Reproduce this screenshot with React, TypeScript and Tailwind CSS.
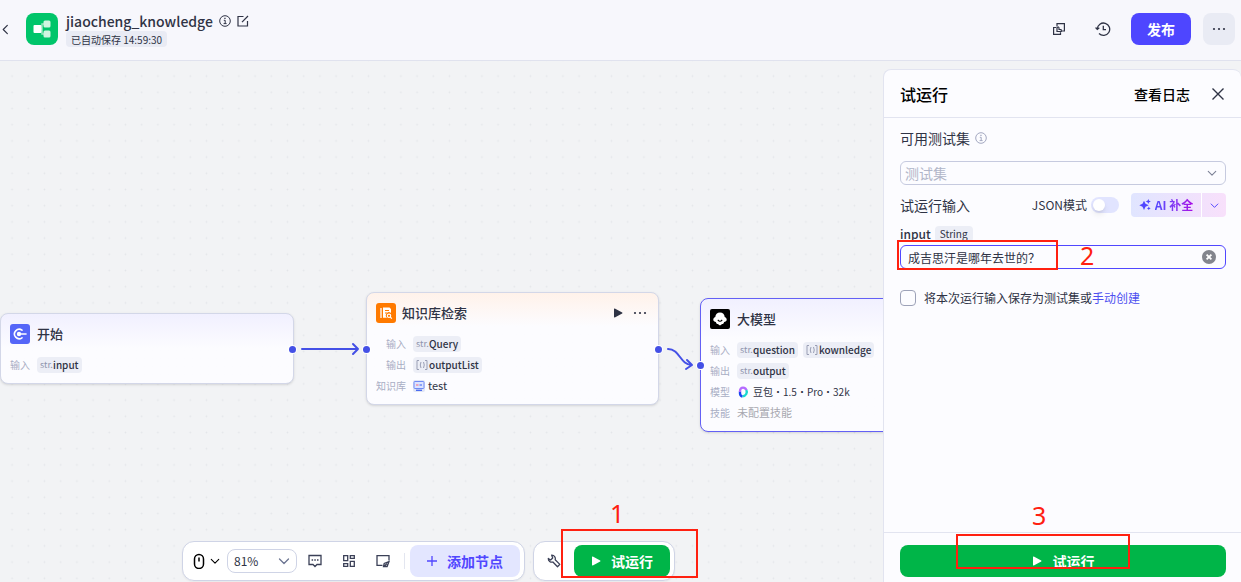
import React, { useState } from 'react';

const ZOOM = 81;

type IconProps = { className?: string };

const ChevronDown = ({ className = '' }: IconProps) => (
  <svg viewBox="0 0 12 12" fill="none" stroke="currentColor" strokeWidth="1.300" strokeLinecap="round" strokeLinejoin="round" className={className}>
    <path d="M1.500 4L6 8.500 10.500 4" />
  </svg>
);

const PlayIcon = ({ className = '' }: IconProps) => (
  <svg viewBox="0 0 10 10" fill="currentColor" className={className}>
    <path d="M1 .9v8.200c0 .4.4.6.8.4l7.400-4.100c.4-.2.4-.6 0-.8L1.800.5C1.400.3 1 .5 1 .9z" />
  </svg>
);

const DotsIcon = ({ className = '' }: IconProps) => (
  <svg viewBox="0 0 14 14" fill="currentColor" className={className}>
    <circle cx="2" cy="7" r="1.100" />
    <circle cx="7" cy="7" r="1.100" />
    <circle cx="12" cy="7" r="1.100" />
  </svg>
);

const InfoIcon = ({ className = '' }: IconProps) => (
  <svg viewBox="0 0 12 12" fill="none" stroke="currentColor" className={className}>
    <circle cx="6" cy="6" r="5.300" />
    <path d="M4.800 5.300H6.200V8.500M4.600 8.600H7.600" />
    <path d="M5.300 3.300H6.600" strokeWidth="1.300" />
  </svg>
);

const Tag = ({ type, name }: { type: string; name: string }) => (
  <span className="flex h-4 items-center gap-px rounded bg-[#eceef6] px-[3px]">
    {type === 'str' ? (
      <span className="w-3 text-[9px] text-[#8f95ad]">str.</span>
    ) : (
      <svg viewBox="0 0 12 10" fill="none" stroke="#9a9fb5" className="h-[10px] w-3">
        <path d="M3 .5H1v9h2M9 .5h2v9H9M5 2Q3.500 5 5 8M7.500 2Q9 5 7.500 8" />
      </svg>
    )}
    <span className="text-[10px] font-medium text-[#2f3345]">{name}</span>
  </span>
);

const Row = ({ label, labelWidth, children }: { label: string; labelWidth: string; children: React.ReactNode }) => (
  <div className="flex h-[21px] items-center gap-[7px]">
    <span className={`${labelWidth} shrink-0 text-right text-[10px] text-[#a9aec4]`}>{label}</span>
    {children}
  </div>
);

const Port = ({ className }: { className: string }) => (
  <span className={`absolute size-[7px] rounded-full bg-[#4450e6] ring-1 ring-white ${className}`} />
);

const StartNode = () => (
  <div className="absolute left-0 top-[252px] h-[71px] w-[294px] rounded-lg border border-[#d3d7e8] bg-[#fcfcff] bg-linear-to-b from-[#f1f0ff] to-[#fcfcff] to-50% px-[9px] pt-[10px] shadow-sm">
    <div className="flex h-5 items-center gap-[7px]">
      <svg viewBox="0 0 20 20" className="size-5">
        <rect width="20" height="20" rx="3" fill="#5566f8" />
        <path d="M12 6.200A4.700 4.700 0 1 0 12 13.800" fill="none" stroke="#fff" strokeWidth="1.600" strokeLinecap="round" />
        <circle cx="9" cy="10" r="2.200" fill="#fff" />
        <path d="M9 10h7" stroke="#fff" strokeWidth="1.600" strokeLinecap="round" />
      </svg>
      <h3 className="text-[13px] font-medium">开始</h3>
    </div>
    <div className="mt-[10px]">
      <Row label="输入" labelWidth="w-5">
        <Tag type="str" name="input" />
      </Row>
    </div>
    <Port className="-right-[3px] top-[32px]" />
  </div>
);

const KnowledgeNode = () => (
  <div className="absolute left-[366px] top-[231px] h-[113px] w-[293px] rounded-lg border border-[#d3d7e8] bg-[#fcfcff] bg-linear-to-b from-[#fff2ea] to-[#fcfcff] to-30% px-[9px] pt-[10px] shadow-sm">
    <div className="flex h-5 items-center">
      <svg viewBox="0 0 20 20" className="size-5">
        <rect width="20" height="20" rx="3" fill="#ff7a00" />
        <path d="M5 5v10" stroke="#fff" strokeWidth="1.300" />
        <path d="M7 4.500h6.500l1.500 1.500v4a3 3 0 0 0-4 4.800H7z" fill="#fff" />
        <path d="M9 7.500h4M9 10h2" stroke="#ff7a00" strokeWidth="1.100" />
        <circle cx="13" cy="12.800" r="1.700" fill="none" stroke="#fff" strokeWidth="1.100" />
        <path d="M14.300 14.200l1.500 1.500" stroke="#fff" strokeWidth="1.200" />
      </svg>
      <h3 className="ml-[6px] flex-1 text-[13px] font-medium">知识库检索</h3>
      <button aria-label="运行节点">
        <PlayIcon className="size-[10px]" />
      </button>
      <button aria-label="更多" className="mr-[2px] ml-[10px]">
        <DotsIcon className="size-[14px]" />
      </button>
    </div>
    <div className="mt-[10px]">
      <Row label="输入" labelWidth="w-[30px]">
        <Tag type="str" name="Query" />
      </Row>
      <Row label="输出" labelWidth="w-[30px]">
        <Tag type="list" name="outputList" />
      </Row>
      <Row label="知识库" labelWidth="w-[30px]">
        <svg viewBox="0 0 12 12" className="size-3">
          <rect width="12" height="12" rx="2" fill="#dfe4f5" />
          <rect x="1" y="1.500" width="10" height="7" rx=".8" fill="#dbe3ff" stroke="#6f8af5" />
          <path d="M3 5h2.500" stroke="#ef8fa6" strokeWidth="1.500" />
          <path d="M6.500 5h2.500" stroke="#718cf7" strokeWidth="1.500" />
          <path d="M3 10.300h6" stroke="#4b6cf0" strokeWidth="1.400" />
        </svg>
        <span className="-ml-1 text-[11px]">test</span>
      </Row>
    </div>
    <Port className="-left-[4px] top-[53px]" />
    <Port className="-right-[4px] top-[53px]" />
  </div>
);

const ModelNode = () => (
  <div className="absolute left-[700px] top-[237px] h-[134px] w-[293px] rounded-lg border border-[#6360f5] bg-[#fcfcff] bg-linear-to-b from-[#f1f0ff] to-[#fcfcff] to-30% px-[9px] pt-[10px] shadow-sm">
    <div className="flex h-5 items-center gap-[7px]">
      <svg viewBox="0 0 20 20" className="size-5">
        <rect width="20" height="20" rx="2" fill="#000" />
        <path
          d="M10 3.600c2.800 0 4.600 2 4.700 4.400 1.500.6 2.100 1.700 2 2.800-.1 1.300-1.200 2.200-2.600 2.200-.2 1.300-1 2.200-2.200 2-.5.900-1.200 1.300-1.900 1.300s-1.400-.4-1.900-1.300c-1.200.2-2-.7-2.200-2-1.400 0-2.500-.9-2.600-2.200-.1-1.100.5-2.200 2-2.800.1-2.400 1.900-4.400 4.700-4.400z"
          fill="#fff"
        />
        <path d="M7.800 10.800q2.200 2.800 4.400 0" fill="none" stroke="#000" strokeWidth="1.100" />
      </svg>
      <h3 className="text-[13px] font-medium">大模型</h3>
    </div>
    <div className="mt-[10px]">
      <Row label="输入" labelWidth="w-5">
        <Tag type="str" name="question" />
        <span className="-ml-[2px]">
          <Tag type="list" name="kownledge" />
        </span>
      </Row>
      <Row label="输出" labelWidth="w-5">
        <Tag type="str" name="output" />
      </Row>
      <Row label="模型" labelWidth="w-5">
        <svg viewBox="0 0 12 12" fill="none" strokeWidth="2.400" className="size-3">
          <path d="M9.200 3.800C10.800 6.500 9 10.200 5.500 10.200" stroke="#18d9cf" />
          <path d="M5.400 10.600C3.200 10 2.800 8 3 5.500" stroke="#1746f0" />
          <path d="M3 6C2.800 2.500 4.500 1.600 6 1.600c2 0 3 1.200 3.200 2.600" stroke="#b56bff" />
        </svg>
        <span className="-ml-[3px] text-[10px]">豆包・1.5・Pro・32k</span>
      </Row>
      <Row label="技能" labelWidth="w-5">
        <span className="text-[11px] text-[#a8a9b0]">未配置技能</span>
      </Row>
    </div>
    <Port className="-left-[4px] top-[63px]" />
  </div>
);

const Canvas = () => (
  <main className="relative min-w-0 flex-1">
    <svg className="absolute inset-0 size-full">
      <defs>
        <pattern id="dots" width="20" height="20" patternUnits="userSpaceOnUse" patternTransform={`translate(4 7) scale(${ZOOM / 100})`}>
          <circle cx="10" cy="10" r="1.100" fill="#e4e6ea" />
        </pattern>
      </defs>
      <rect width="100%" height="100%" fill="url(#dots)" />
      <g fill="none" stroke="#4450e6" strokeWidth="2" strokeLinecap="round" strokeLinejoin="round">
        <path d="M302 288H358M353 283l5 5-5 5" />
        <path d="M668 288C680 288 680 304 692 304M687 299l5 5-6 4" />
      </g>
    </svg>
    <StartNode />
    <KnowledgeNode />
    <ModelNode />
  </main>
);

const Toolbar = () => (
  <div className="absolute bottom-px left-[182px] flex gap-2 text-[#3b4057]">
    <div className="flex h-10 items-center rounded-xl border border-[#cfd4e6] bg-white pr-1 pl-[10px] shadow-xs">
      <button aria-label="鼠标模式" className="flex items-center gap-[5px] text-black">
        <svg viewBox="0 0 12 16" fill="none" stroke="currentColor" strokeWidth="1.500" className="h-4 w-3">
          <rect x="1.500" y="1.500" width="9" height="14" rx="4.500" />
          <path d="M6 4.500v4" />
        </svg>
        <ChevronDown className="size-[10px]" />
      </button>
      <div className="relative ml-[7px]">
        <select aria-label="缩放" className="block h-6 w-[70px] appearance-none rounded-lg border border-[#cfd4e6] pl-[6px] text-xs text-[#2f3345]">
          <option>{ZOOM}%</option>
        </select>
        <ChevronDown className="pointer-events-none absolute top-[6px] right-[7px] size-3 text-[#6c7592]" />
      </div>
      <button aria-label="注释" className="ml-[11px]">
        <svg viewBox="0 0 14 14" fill="none" stroke="currentColor" strokeWidth="1.300" className="size-[14px]">
          <path d="M1 1.500h12v9H9l-2 2-2-2H1z" />
          <path d="M3.600 6h1.500M6.300 6h1.500M9 6h1.500" strokeWidth="1.500" />
        </svg>
      </button>
      <button aria-label="优化布局" className="ml-5">
        <svg viewBox="0 0 14 14" fill="none" stroke="currentColor" strokeWidth="1.300" className="size-[14px]">
          <path d="M1.700 1.700h4v5h-4zM8.300 1.700h4v2.600h-4zM1.700 9.700h4v2.600h-4zM8.300 7.300h4v5h-4z" />
        </svg>
      </button>
      <button aria-label="缩略图" className="ml-5">
        <svg viewBox="0 0 14 14" fill="none" stroke="currentColor" strokeWidth="1.300" className="size-[14px]">
          <path d="M6.500 11.300H1V1.700h12v4.800" />
          <path d="M13 7.500L8.200 9.500 7.500 12.500h3.600L13 7.500zM8 12.500l3-3" />
        </svg>
      </button>
      <span className="mr-[5px] ml-[14px] h-4 w-px bg-[#e3e6f0]" />
      <button className="flex h-8 w-[110px] items-center justify-center gap-[10px] rounded-lg bg-[#e3e6ff] text-sm font-bold text-[#5147ff]">
        <svg viewBox="0 0 10 10" stroke="currentColor" strokeWidth="1.300" className="size-[10px]">
          <path d="M5 0v10M0 5h10" />
        </svg>
        添加节点
      </button>
    </div>
    <div className="flex h-10 items-center gap-[13px] rounded-xl border border-[#cfd4e6] bg-white pr-1 pl-[13px] shadow-xs">
      <button aria-label="调试">
        <svg viewBox="0 0 14 14" fill="none" stroke="currentColor" strokeWidth="1.300" strokeLinejoin="round" className="size-[14px]">
          <path d="M4.700 1.200A3.500 3.500 0 0 1 8.200 5.800L12.800 10.400 10.500 12.800 5.900 8A3.500 3.500 0 0 1 1.300 4.500L3.600 6 5.700 4z" />
        </svg>
      </button>
      <button className="flex h-8 w-24 items-center justify-center gap-[10px] rounded-lg bg-[#00b548] text-sm font-bold text-white">
        <PlayIcon className="size-[10px]" />
        试运行
      </button>
    </div>
  </div>
);

const Header = () => (
  <header className="flex h-[61px] shrink-0 items-center border-b border-[#e0e2ee] bg-[#f7f7fc] pr-[6px] pb-[2px]">
    <button aria-label="返回" className="w-[10px]">
      <ChevronDown className="size-[11px] rotate-90" />
    </button>
    <svg viewBox="0 0 32 32" className="ml-4 size-8">
      <rect width="32" height="32" rx="8" fill="#00c56a" />
      <path d="M12 16h3.500M18.500 11h-2.500v10h2.500" fill="none" stroke="#9be6bf" strokeWidth="1.500" />
      <rect x="17.500" y="7.500" width="7" height="7" rx="1.500" fill="#d0f5e0" />
      <rect x="17.500" y="17.500" width="7" height="7" rx="1.500" fill="#d0f5e0" />
      <rect x="7.500" y="12" width="8" height="8" rx="1" fill="#fff" />
    </svg>
    <div className="ml-2 flex flex-col items-start">
      <div className="flex h-5 items-center">
        <h1 className="text-sm font-medium">jiaocheng_knowledge</h1>
        <InfoIcon className="ml-[6px] size-3" />
        <button aria-label="编辑" className="ml-[6px]">
          <svg viewBox="0 0 12 12" fill="none" stroke="currentColor" strokeWidth="1.200" className="size-3">
            <path d="M6.500 1.500H1v9.500h9.500V6" />
            <path d="M5 7.200L11 1" />
          </svg>
        </button>
      </div>
      <span className="flex h-4 items-center rounded bg-[#e9ebf4] px-[5px] text-[10px]">已自动保存 14:59:30</span>
    </div>
    <div className="ml-auto flex items-center">
      <button aria-label="创建副本">
        <svg viewBox="0 0 14 14" fill="none" stroke="currentColor" strokeWidth="1.200" className="size-[14px]">
          <path d="M8.500 10.200v2.200H1.600V5.500H4" />
          <path d="M7 5.200H5v4.300h4.300V7.500" />
          <path d="M5 4V1.600h7.400V9H9.800" />
          <path d="M7 5.200v2.300h2.300" />
        </svg>
      </button>
      <button aria-label="历史" className="ml-[29px]">
        <svg viewBox="0 0 16 16" fill="none" stroke="currentColor" strokeWidth="1.300" className="size-4">
          <path d="M2.300 8A6.200 6.200 0 1 1 4 12.500" />
          <path d="M.6 6.500l1.700 1.900 2-1.700M8.300 4.800V8.600H11" />
        </svg>
      </button>
      <button className="ml-5 h-8 w-[60px] rounded-lg bg-[#4e46ff] text-sm font-bold text-white">发布</button>
      <button aria-label="更多" className="ml-3 flex size-8 items-center justify-center rounded-lg bg-[#e9ebf4]">
        <DotsIcon className="size-[14px]" />
      </button>
    </div>
  </header>
);

const TestRunPanel = () => {
  const [value, setValue] = useState('成吉思汗是哪年去世的？');
  const [jsonMode, setJsonMode] = useState(false);

  return (
    <aside className="relative mt-2 flex w-[358px] shrink-0 flex-col rounded-t-lg border-t border-l border-[#e2e4f0] bg-[#fcfcff]">
      <div className="flex h-12 items-center border-b border-[#e2e4f0] px-4 text-black">
        <h2 className="flex-1 text-base font-medium">试运行</h2>
        <a href="#logs" className="text-sm font-medium">查看日志</a>
        <button aria-label="关闭" className="ml-[21px]">
          <svg viewBox="0 0 14 14" stroke="#2f3345" strokeWidth="1.400" className="size-[14px]">
            <path d="M1.500 1.500l11 11M12.500 1.500l-11 11" />
          </svg>
        </button>
      </div>

      <div className="flex-1 pr-[15px] pl-4">
        <div className="flex h-[43px] items-center gap-[5px] pb-1">
          <label htmlFor="testset" className="text-sm">可用测试集</label>
          <InfoIcon className="size-3 text-[#a3a8c0]" />
        </div>
        <div className="relative">
          <select id="testset" className="block h-6 w-full appearance-none rounded-md border border-[#c6cadf] pl-1 text-sm text-[#b1b6c8]">
            <option>测试集</option>
          </select>
          <ChevronDown className="pointer-events-none absolute top-[7px] right-[9px] size-[10px] text-[#7d8296]" />
        </div>

        <div className="flex h-10 items-center">
          <h3 className="flex-1 text-sm">试运行输入</h3>
          <label htmlFor="json" className="text-xs">JSON模式</label>
          <input
            id="json"
            type="checkbox"
            role="switch"
            checked={jsonMode}
            onChange={(e) => setJsonMode(e.target.checked)}
            className="ml-1 h-4 w-7 appearance-none rounded-full bg-[#e1e4ff] before:m-[2px] before:block before:size-3 before:rounded-full before:bg-white before:shadow-md checked:bg-[#5147ff] checked:before:ml-[14px]"
          />
          <div className="ml-3 flex h-6 overflow-hidden rounded bg-linear-to-r from-[#e0e5ff] to-[#f8e0fb]">
            <button className="flex w-[70px] items-center justify-center gap-1 text-xs font-bold">
              <svg viewBox="0 0 12 12" fill="#5147ff" className="size-3">
                <path d="M5 1.800l1.500 3 3.200 1.400-3.200 1.500L5 11 3.500 7.700.3 6.200l3.200-1.400z" />
                <path d="M9.300 0l.8 1.700 1.800.8-1.800.8-.8 1.700-.8-1.700-1.800-.8 1.800-.8zM9.800 7.500l.6 1.300 1.300.6-1.300.6-.6 1.300-.6-1.300-1.300-.6 1.300-.6z" />
              </svg>
              <span className="bg-linear-to-r from-[#5147ff] to-[#a800e6] bg-clip-text text-transparent">AI 补全</span>
            </button>
            <button aria-label="更多补全选项" className="flex w-[25px] items-center justify-center border-l border-white text-[#5147ff]">
              <ChevronDown className="size-[9px]" />
            </button>
          </div>
        </div>

        <div className="flex h-5 items-center gap-1 pb-[3px]">
          <label htmlFor="input" className="text-xs font-medium">input</label>
          <span className="flex h-4 items-center rounded bg-[#eceef6] px-[5px] text-[10px]">String</span>
        </div>
        <div className="relative">
          <input
            id="input"
            type="text"
            value={value}
            onChange={(e) => setValue(e.target.value)}
            className="block h-6 w-full rounded-md border border-[#5147ff] bg-transparent pr-8 pl-[7px] text-xs outline-none"
          />
          <button aria-label="清空" onClick={() => setValue('')} className="absolute top-[5px] right-[10px]">
            <svg viewBox="0 0 14 14" className="size-[14px]">
              <circle cx="7" cy="7" r="7" fill="#83858d" />
              <path d="M4.600 4.600l4.800 4.800M9.400 4.600l-4.800 4.800" stroke="#fff" strokeWidth="1.800" />
            </svg>
          </button>
        </div>

        <div className="mt-[21px] flex items-center gap-2 text-xs">
          <input id="save" type="checkbox" className="size-4 appearance-none rounded-[4px] border border-[#9da2b8] checked:bg-[#5147ff]" />
          <span>
            <label htmlFor="save">将本次运行输入保存为测试集或</label>
            <a href="#create" className="text-[#4d4ff0]">手动创建</a>
          </span>
        </div>
      </div>

      <div className="border-t border-[#e2e4f0] pt-3 pr-[15px] pb-[5px] pl-4">
        <button className="flex h-8 w-full items-center justify-center gap-[11px] rounded-lg bg-[#00b548] text-sm font-bold text-white">
          <PlayIcon className="size-[10px]" />
          试运行
        </button>
      </div>
    </aside>
  );
};

// Numbered step markers drawn over the page
const Marker = ({ box, label, children }: { box: string; label: string; children: string }) => (
  <>
    <div className={`pointer-events-none absolute border-2 border-[#ff2010] ${box}`} />
    <span className={`pointer-events-none absolute font-['Noto_Sans',sans-serif] text-[25px] leading-[30px] text-[#ff2010] ${label}`}>
      {children}
    </span>
  </>
);

function App() {
  return (
    <div className="relative flex h-screen flex-col overflow-hidden bg-[#f2f3f5] font-['Noto_Sans_CJK_SC',sans-serif] text-[#2f3345]">
      <Header />
      <div className="flex min-h-0 flex-1">
        <Canvas />
        <TestRunPanel />
      </div>
      <Toolbar />
      <Marker box="left-[561px] top-[529px] h-[49px] w-[137px]" label="left-[610px] top-[498px]">1</Marker>
      <Marker box="left-[897px] top-[240px] h-[30px] w-[161px]" label="left-[1080px] top-[240px]">2</Marker>
      <Marker box="left-[956px] top-[534px] h-[35px] w-[174px]" label="left-[1032px] top-[500px]">3</Marker>
    </div>
  );
}

export default App;
